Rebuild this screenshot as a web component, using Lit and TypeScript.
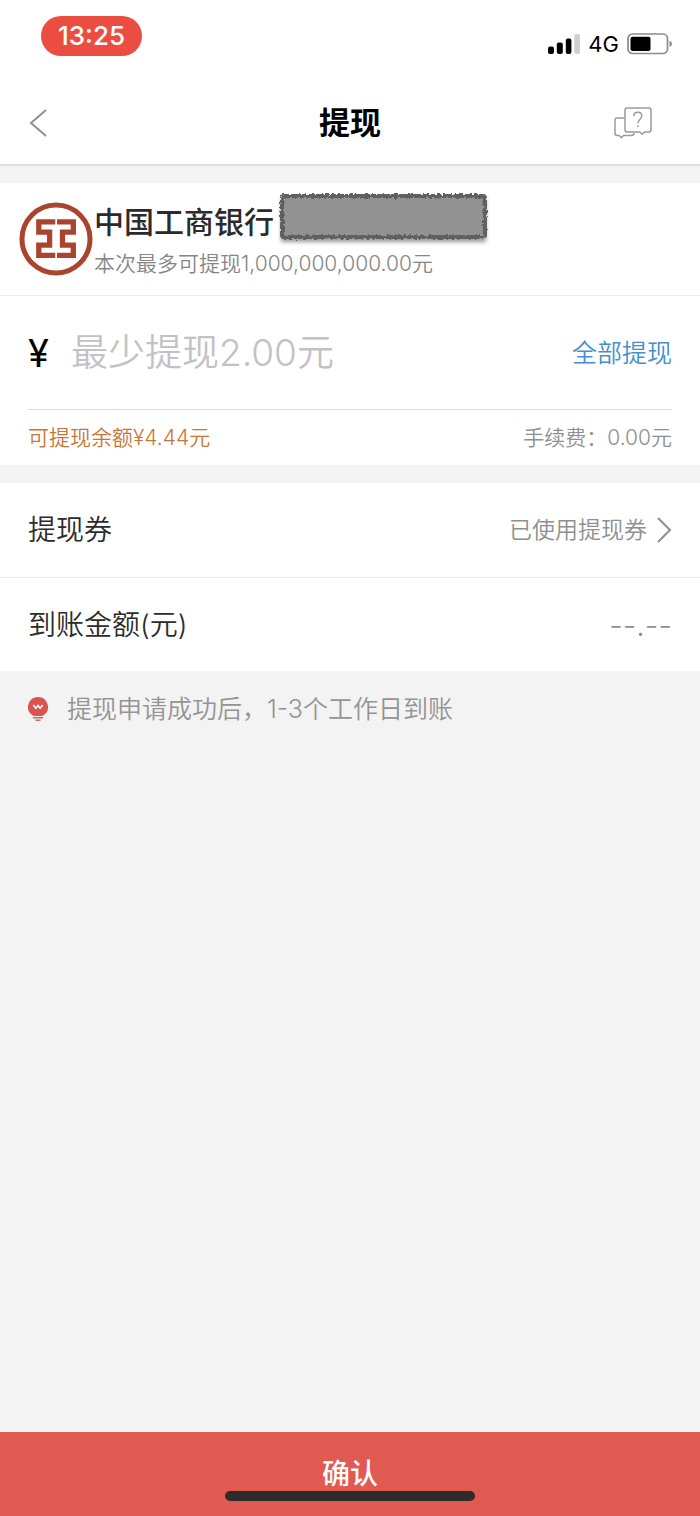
import { LitElement, html, css, svg } from "lit";
import { customElement, state } from "lit/decorators.js";

const backIcon = svg`<svg width="18" height="28" viewBox="0 0 18 28" fill="none" stroke="#8f8f8f" stroke-width="2"><path d="M17 1 2 14l15 13"/></svg>`;

const forwardIcon = svg`<svg width="15" height="26" viewBox="0 0 15 26" fill="none" stroke="#8f8f8f" stroke-width="2"><path d="M1 1l12 12L1 25"/></svg>`;

const helpIcon = svg`<svg width="38" height="32" viewBox="0 0 38 32" fill="none" stroke="#9a9a9a" stroke-width="1.5" stroke-linejoin="round">
  <path d="M10.500 11H3.200Q1 11 1 13.200V26.300Q1 28.500 3.200 28.500H5.200L7.400 30.600 9.600 28.500H17.500Q20 28.500 20 26"/>
  <path d="M13.200 1H34.800Q37 1 37 3.200V22.800Q37 25 34.800 25H30.500L28.200 27.300 25.900 25H13.200Q11 25 11 22.800V3.200Q11 1 13.200 1Z"/>
  <path d="M19.800 9.200C19.800 6.800 21.400 5.300 23.800 5.300S27.800 6.800 27.800 9C27.800 12.200 23.900 12.400 23.900 16.300M23.900 18.200V20.200"/>
</svg>`;

const signalIcon = svg`<svg width="32" height="20" viewBox="0 0 32 20">
  <rect x="0" y="12.500" width="6" height="7.500" rx="2"/>
  <rect x="8.800" y="8.500" width="6" height="11.500" rx="2"/>
  <rect x="17.800" y="4.500" width="5.600" height="15.500" rx="2"/>
  <rect x="26.300" y="0" width="5.700" height="20" rx="2" fill="#cfcfcf"/>
</svg>`;

const batteryIcon = svg`<svg width="46" height="22" viewBox="0 0 46 22">
  <rect x="1" y="1" width="39.500" height="19.500" rx="4.500" fill="none" stroke="#8c8c8c" stroke-width="1.700"/>
  <rect x="3.500" y="3.700" width="20" height="14.200" rx="2"/>
  <path d="M42.500 7.500Q45 8.500 45 10.800T42.500 14Z" fill="#8c8c8c"/>
</svg>`;

const bankLogo = svg`<svg class="logo" width="74" height="74" viewBox="0 0 74 74" fill="none" stroke="#a9452f">
  <circle cx="37" cy="37" r="34" stroke-width="5"/>
  <path stroke-width="5.300" d="M36.300 19.800H19.800V30.200H30.600V43.200H19.800V53.400H36.300M38 19.800H54.300V30.200H43.500V43.200H54.300V53.400H38"/>
</svg>`;

const maskBlock = svg`<svg class="mask" width="212" height="54" viewBox="0 0 212 54" aria-hidden="true">
  <defs>
    <filter id="rough" x="-5%" y="-15%" width="110%" height="130%">
      <feTurbulence type="fractalNoise" baseFrequency="0.35" numOctaves="2" seed="4" result="n"/>
      <feDisplacementMap in="SourceGraphic" in2="n" scale="5"/>
    </filter>
    <filter id="soft" x="-5%" y="-20%" width="110%" height="150%"><feGaussianBlur stdDeviation="2"/></filter>
  </defs>
  <rect x="3" y="6" width="205" height="44" fill="#000" opacity="0.4" filter="url(#soft)"/>
  <rect x="4" y="4" width="203" height="41" rx="2" fill="#929292" stroke="#606060" stroke-width="4" filter="url(#rough)"/>
</svg>`;

const bulbIcon = svg`<svg width="20" height="25" viewBox="0 0 20 25">
  <path fill="#dc534e" d="M10 0A10 10 0 0 1 15.500 18.300Q14.500 19 13.500 19H6.500Q5.500 19 4.500 18.300A10 10 0 0 1 10 0Z"/>
  <path d="M5 20.800H15M7.500 23.200H12.500" stroke="#d2665f" stroke-width="1.600"/>
  <path d="M5.300 8 7.900 11.200 10 8.500 12.100 11.200 14.700 8" fill="none" stroke="#fff" stroke-width="1.600"/>
</svg>`;

@customElement("app-root")
export class AppRoot extends LitElement {
  @state() private amount = "";

  static styles = css`
    :host {
      display: flex;
      flex-direction: column;
      min-height: 100vh;
      background: #f3f3f3;
      color: #2b2b2b;
      font-family: Inter, "Noto Sans CJK SC", sans-serif;
      font-size: 28px;
      font-weight: 350;
      line-height: 40px;
    }
    * { box-sizing: border-box; }
    svg { display: block; flex: none; }
    button, input {
      font: inherit;
      color: inherit;
      background: none;
      border: 0;
      padding: 0;
      margin: 0;
      border-radius: 0;
    }
    button { cursor: pointer; }
    .top { background: #fff; border-bottom: 2px solid #dedede; }
    .status {
      display: flex;
      justify-content: space-between;
      align-items: flex-start;
      height: 82px;
      padding: 16px 27px 0 41px;
    }
    .time {
      padding: 0 17px;
      border-radius: 20px;
      background: #eb4e40;
      color: #fff;
      font-size: 26px;
      font-weight: 500;
    }
    .signals {
      display: flex;
      align-items: center;
      gap: 8px;
      height: 55px;
      color: #000;
      font-size: 22px;
      font-weight: 400;
    }
    .nav {
      display: grid;
      grid-template-columns: 1fr auto 1fr;
      align-items: center;
      height: 82px;
      padding: 0 48px 0 29px;
    }
    .nav .help { justify-self: end; }
    .nav .back { justify-self: start; }
    h1 {
      margin: 0 0 0 19px;
      color: #000;
      font-size: 31px;
      font-weight: 700;
    }
    .card { margin-top: 17px; background: #fff; }
    .card + .card { margin-top: 18px; }
    .bank {
      display: flex;
      align-items: center;
      padding: 9px 19px 19px;
      border-bottom: 1px solid #ececec;
    }
    .logo { margin-top: 9px; }
    .bank-info { padding-left: 1px; }
    .bank-name {
      display: flex;
      gap: 4px;
      font-size: 30px;
      font-weight: 500;
      line-height: 60px;
    }
    .limit { color: #868686; font-size: 21px; line-height: 24px; }
    .pad { padding: 0 28px; }
    .amount {
      display: flex;
      align-items: center;
      height: 114px;
      border-bottom: 1px solid #dcdcdc;
    }
    .yen { width: 43px; color: #000; font-size: 38px; font-weight: 400; }
    .amount input {
      flex: 1;
      min-width: 0;
      height: 60px;
      outline: none;
      font-size: 37px;
    }
    .amount input::placeholder { color: #c2c2c6; opacity: 1; }
    .amount .all { color: #4590ca; font-size: 25px; }
    .sums {
      display: flex;
      justify-content: space-between;
      align-items: center;
      height: 55px;
      color: #8f8f8f;
      font-size: 21px;
    }
    .balance { color: #cb7534; }
    .row {
      display: flex;
      justify-content: space-between;
      align-items: center;
      width: 100%;
      height: 94px;
      padding: 0 28px;
      text-align: left;
    }
    .row + .row { border-top: 1px solid #ececec; }
    .value {
      display: flex;
      align-items: center;
      gap: 10px;
      color: #8f8f8f;
      font-size: 23px;
    }
    .value.result { font-size: 30px; }
    .notice {
      display: flex;
      align-items: center;
      gap: 19px;
      margin: 0;
      padding: 18px 28px;
      color: #949494;
      font-size: 25px;
    }
    footer { position: relative; margin-top: auto; }
    .confirm {
      display: block;
      width: 100%;
      height: 84px;
      background: #e15a51;
      color: #fff;
      font-size: 28px;
      font-weight: 500;
    }
    .home {
      position: absolute;
      left: 50%;
      bottom: 15px;
      width: 250px;
      height: 10px;
      margin-left: -125px;
      border-radius: 5px;
      background: #2f2b2b;
    }
  `;

  private fillAll() {
    this.amount = "4.44";
  }

  private onInput(e: Event) {
    this.amount = (e.target as HTMLInputElement).value;
  }

  render() {
    return html`
      <header class="top">
        <div class="status">
          <span class="time">13:25</span>
          <div class="signals">${signalIcon}<span>4G</span>${batteryIcon}</div>
        </div>
        <nav class="nav">
          <button class="back" aria-label="返回">${backIcon}</button>
          <h1>提现</h1>
          <button class="help" aria-label="帮助">${helpIcon}</button>
        </nav>
      </header>
      <section class="card">
        <div class="bank">
          ${bankLogo}
          <div class="bank-info">
            <div class="bank-name"><span>中国工商银行</span>${maskBlock}</div>
            <div class="limit">本次最多可提现1,000,000,000.00元</div>
          </div>
        </div>
        <div class="pad">
          <div class="amount">
            <label class="yen" for="amount">¥</label>
            <input id="amount" inputmode="decimal" placeholder="最少提现2.00元" .value=${this.amount} @input=${this.onInput} />
            <button class="all" @click=${this.fillAll}>全部提现</button>
          </div>
          <div class="sums">
            <span class="balance">可提现余额¥4.44元</span>
            <span>手续费：0.00元</span>
          </div>
        </div>
      </section>
      <section class="card">
        <button class="row">
          <span>提现券</span>
          <span class="value">已使用提现券${forwardIcon}</span>
        </button>
        <div class="row">
          <span>到账金额(元)</span>
          <span class="value result">--.--</span>
        </div>
      </section>
      <p class="notice">${bulbIcon}<span>提现申请成功后，1-3个工作日到账</span></p>
      <footer>
        <button class="confirm">确认</button>
        <div class="home"></div>
      </footer>
    `;
  }
}
